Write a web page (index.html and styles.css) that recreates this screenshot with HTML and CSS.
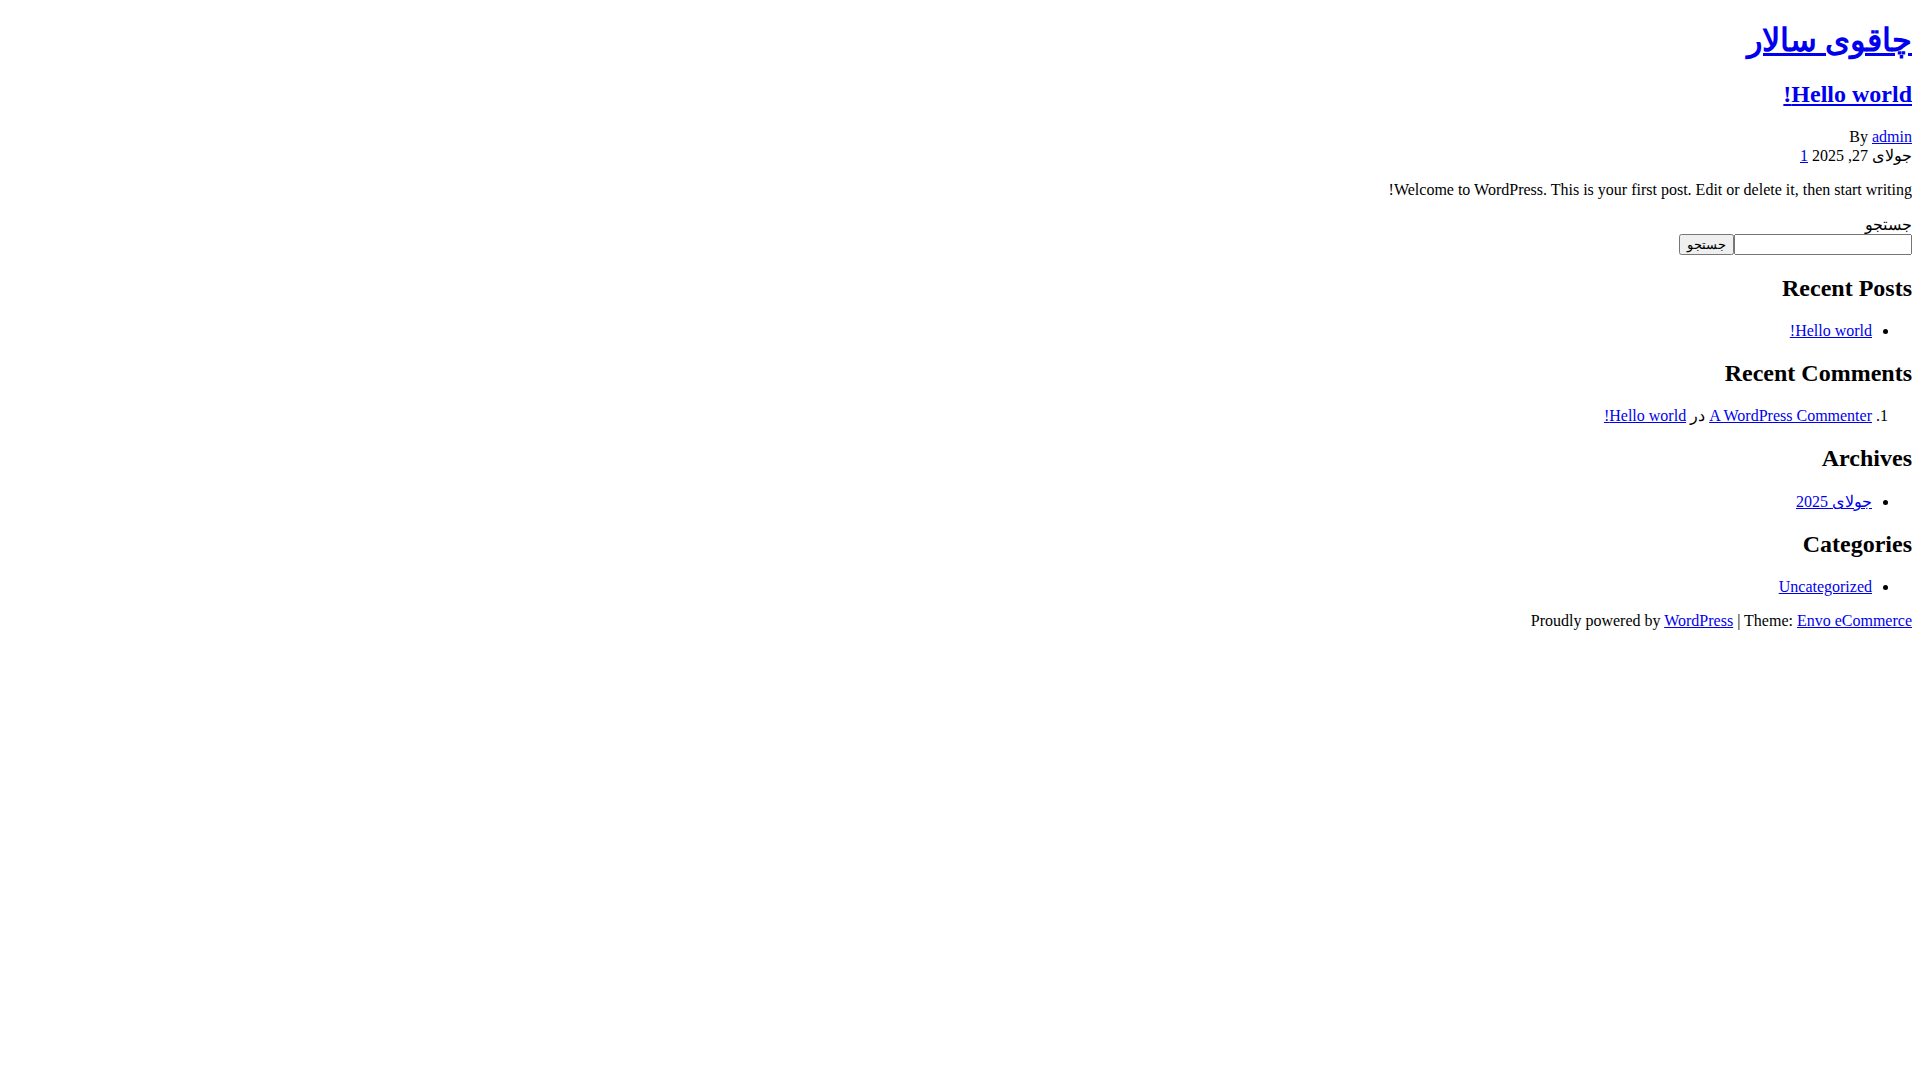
FILE: index.html
```html
<!DOCTYPE html>
<html lang="fa" dir="rtl">
<head>
<meta charset="utf-8">
<title>چاقوی سالار</title>
<link rel="stylesheet" href="styles.css">
</head>
<body>
<header class="site-header">
  <h1 class="site-title"><a href="#">چاقوی سالار</a></h1>
</header>
<main class="site-main">
  <article class="post">
    <h2 class="entry-title"><a href="#">Hello world!</a></h2>
    <div class="entry-meta">
      <div class="author">By <a href="#">admin</a></div>
      <div class="date"><span class="posted-on">جولای 27, 2025</span> <a href="#">1</a></div>
    </div>
    <div class="entry-content">
      <p>Welcome to WordPress. This is your first post. Edit or delete it, then start writing!</p>
    </div>
  </article>
</main>
<aside class="sidebar">
  <form class="search-form">
    <label class="search-label" for="s">جستجو</label>
    <div class="search-inside"><input id="s" type="search" class="search-input"><button type="button" class="search-button">جستجو</button></div>
  </form>
  <h2 class="widget-title">Recent Posts</h2>
  <ul class="widget-list">
    <li><a href="#">Hello world!</a></li>
  </ul>
  <h2 class="widget-title">Recent Comments</h2>
  <ol class="widget-list">
    <li><a href="#">A WordPress Commenter</a> در <a href="#">Hello world!</a></li>
  </ol>
  <h2 class="widget-title">Archives</h2>
  <ul class="widget-list">
    <li><a href="#">جولای 2025</a></li>
  </ul>
  <h2 class="widget-title">Categories</h2>
  <ul class="widget-list">
    <li><a href="#">Uncategorized</a></li>
  </ul>
</aside>
<footer class="site-footer">
  Proudly powered by <a href="#">WordPress</a> | Theme: <a href="#">Envo eCommerce</a>
</footer>
</body>
</html>
```

FILE: styles.css
```css
html {
  background: #ffffff;
}
body {
  margin: 8px;
  font-family: "Liberation Serif", serif;
  font-size: 16px;
  color: #000000;
}
a {
  color: #0000ee;
}
.site-title {
  font-size: 32px;
  margin: 13.44px 0 21.44px;
}
.entry-title,
.widget-title {
  font-size: 24px;
  margin: 19.92px 0;
}
.entry-content p {
  margin: 16px 0;
}
.search-input,
.search-button {
  font-size: 13.33px;
}
.search-input {
  width: 178px;
  box-sizing: border-box;
}
.widget-list {
  margin: 16px 0;
  padding-inline-start: 40px;
}
```
